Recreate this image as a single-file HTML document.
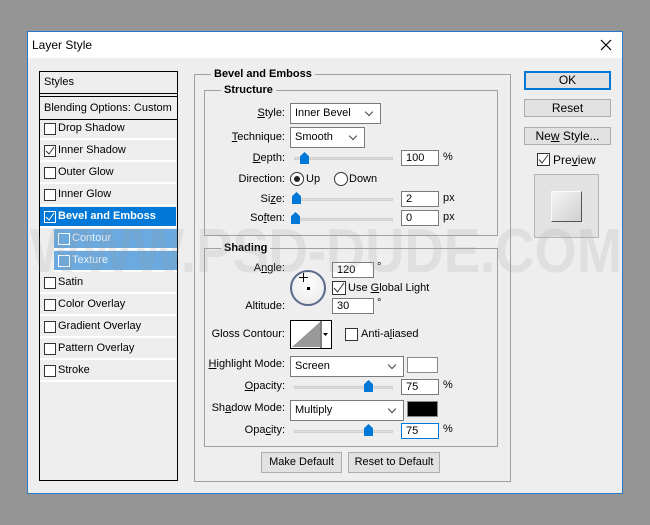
<!DOCTYPE html>
<html><head><meta charset="utf-8"><style>
*{box-sizing:border-box;margin:0;padding:0}
body{width:650px;height:525px;background:#959595;font-family:"Liberation Sans",sans-serif;font-size:11px;color:#000;position:relative;overflow:hidden}
.a{position:absolute}
#win{left:27px;top:31px;width:596px;height:463px;background:#eeeeee;border:1px solid #2b79c9}
#tb{left:0;top:0;width:594px;height:26px;background:#fff}
.box{position:absolute;border:1px solid #a0a0a0}
.lg{position:absolute;background:#eeeeee;font-weight:bold;padding:0 3px;font-size:11px}
.lbl{position:absolute;text-align:right;width:120px;font-size:11px}
.in{position:absolute;background:#fff;border:1px solid #7a7a7a;height:16px;padding-left:4px;line-height:14px;font-size:11px}
.dd{position:absolute;background:#fff;border:1px solid #7a7a7a;height:21px;padding-left:4px;line-height:19px;font-size:11px}
.dd:after{content:"";position:absolute;right:8px;top:5px;width:5px;height:5px;border-right:1px solid #444;border-bottom:1px solid #444;transform:rotate(45deg)}
.tr{position:absolute;height:3px;background:#ddd;border:1px solid #d0d0d0}
.th{position:absolute;width:9px;height:12px;background:#0078d7;clip-path:polygon(50% 0,100% 35%,100% 100%,0 100%,0 35%)}
.cb{position:absolute;width:12px;height:12px;border:1px solid #333;background:#fff}
.row{position:absolute;left:1px;width:136px;height:21px;border-bottom:2px solid #fff;line-height:19px;padding-left:18px}
.row .cb{left:4px;top:4px}
.btn{position:absolute;background:#e1e1e1;border:1px solid #adadad;text-align:center;font-size:12px}
u{text-decoration:underline}
</style></head><body>
<div id="win" class="a">
 <div id="tb" class="a"><span class="a" style="left:4px;top:6px;font-size:12px">Layer Style</span>
 <svg class="a" style="left:572px;top:7px" width="12" height="12"><path d="M1 1L11 11M11 1L1 11" stroke="#000" stroke-width="1.2"/></svg></div>
</div>

<!-- left list -->
<div class="a" style="left:39px;top:71px;width:139px;height:410px;border:1px solid #000;background:#eeeeee">
 <div class="a" style="left:0;top:0;width:137px;height:22px;border-bottom:1px solid #000;line-height:20px;padding-left:4px">Styles</div>
 <div class="a" style="left:0;top:24px;width:137px;height:24px;border-top:1px solid #000;border-bottom:1px solid #000;line-height:22px;padding-left:4px">Blending Options: Custom</div>
 <div class="row" style="top:47px;left:0"><div class="cb"></div>Drop Shadow</div>
 <div class="row" style="top:69px;left:0"><div class="cb"><svg width="10" height="10" style="position:absolute;left:0;top:0"><path d="M1 5L4 8L9 1" stroke="#333" fill="none"/></svg></div>Inner Shadow</div>
 <div class="row" style="top:91px;left:0"><div class="cb"></div>Outer Glow</div>
 <div class="row" style="top:113px;left:0"><div class="cb"></div>Inner Glow</div>
 <div class="row" style="top:135px;left:0;background:#0078d7;color:#fff;font-weight:bold"><div class="cb" style="background:#0078d7;border-color:#fff"><svg width="10" height="10" style="position:absolute;left:0;top:0"><path d="M1 5L4 8L9 1" stroke="#fff" fill="none"/></svg></div>Bevel and Emboss</div>
 <div class="row" style="top:157px;left:14px;width:123px;background:#6aaae0;color:#eaf3fc"><div class="cb" style="background:#6aaae0;border-color:#fff"></div>Contour</div>
 <div class="row" style="top:179px;left:14px;width:123px;background:#6aaae0;color:#eaf3fc"><div class="cb" style="background:#6aaae0;border-color:#fff"></div>Texture</div>
 <div class="row" style="top:201px;left:0"><div class="cb"></div>Satin</div>
 <div class="row" style="top:223px;left:0"><div class="cb"></div>Color Overlay</div>
 <div class="row" style="top:245px;left:0"><div class="cb"></div>Gradient Overlay</div>
 <div class="row" style="top:267px;left:0"><div class="cb"></div>Pattern Overlay</div>
 <div class="row" style="top:289px;left:0"><div class="cb"></div>Stroke</div>
</div>

<!-- group boxes -->
<div class="box" style="left:194px;top:74px;width:317px;height:408px"></div>
<div class="lg" style="left:211px;top:68px">Bevel and Emboss</div>
<div class="box" style="left:204px;top:90px;width:294px;height:146px"></div>
<div class="lg" style="left:221px;top:84px">Structure</div>
<div class="box" style="left:204px;top:248px;width:294px;height:199px"></div>
<div class="lg" style="left:221px;top:242px">Shading</div>

<!-- structure -->
<div class="lbl" style="left:165px;top:107px"><u>S</u>tyle:</div>
<div class="dd" style="left:290px;top:103px;width:91px">Inner Bevel</div>
<div class="lbl" style="left:165px;top:131px"><u>T</u>echnique:</div>
<div class="dd" style="left:290px;top:127px;width:75px">Smooth</div>
<div class="lbl" style="left:165px;top:152px"><u>D</u>epth:</div>
<div class="tr" style="left:294px;top:157px;width:99px"></div><div class="th" style="left:300px;top:152px"></div>
<div class="in" style="left:401px;top:150px;width:38px">100</div><div class="a" style="left:443px;top:151px">%</div>
<div class="lbl" style="left:165px;top:173px">Direction:</div>
<div class="a" style="left:290px;top:172px;width:14px;height:14px;border:1px solid #333;border-radius:50%;background:#fff"><div class="a" style="left:3px;top:3px;width:6px;height:6px;border-radius:50%;background:#222"></div></div>
<div class="a" style="left:306px;top:173px">Up</div>
<div class="a" style="left:334px;top:172px;width:14px;height:14px;border:1px solid #333;border-radius:50%;background:#fff"></div>
<div class="a" style="left:349px;top:173px">Down</div>
<div class="lbl" style="left:165px;top:193px">Si<u>z</u>e:</div>
<div class="tr" style="left:294px;top:198px;width:99px"></div><div class="th" style="left:292px;top:192px"></div>
<div class="in" style="left:401px;top:191px;width:38px">2</div><div class="a" style="left:443px;top:192px">px</div>
<div class="lbl" style="left:165px;top:212px">So<u>f</u>ten:</div>
<div class="tr" style="left:294px;top:218px;width:99px"></div><div class="th" style="left:291px;top:212px"></div>
<div class="in" style="left:401px;top:210px;width:38px">0</div><div class="a" style="left:443px;top:211px">px</div>

<!-- shading -->
<div class="lbl" style="left:165px;top:262px">A<u>n</u>gle:</div>
<div class="a" style="left:290px;top:270px;width:36px;height:36px;border:2px solid #5a6a8a;border-radius:50%;background:radial-gradient(circle at 50% 40%,#fff,#e6e6e6)"></div>
<div class="a" style="left:307px;top:287px;width:3px;height:3px;background:#000"></div>
<svg class="a" style="left:299px;top:273px" width="9" height="9"><path d="M4.5 0V9M0 4.5H9" stroke="#000" stroke-width="1"/></svg>
<div class="in" style="left:332px;top:262px;width:42px">120</div><div class="a" style="left:377px;top:261px">°</div>
<div class="cb" style="left:332px;top:281px;width:14px;height:14px"><svg width="12" height="12" style="position:absolute;left:0;top:0"><path d="M1 6L4.5 10L11 1" stroke="#333" fill="none"/></svg></div>
<div class="a" style="left:348px;top:282px">Use <u>G</u>lobal Light</div>
<div class="lbl" style="left:165px;top:300px">Altitude:</div>
<div class="in" style="left:332px;top:298px;width:42px">30</div><div class="a" style="left:377px;top:297px">°</div>
<div class="lbl" style="left:165px;top:328px">Gloss Contour:</div>
<div class="a" style="left:290px;top:320px;width:42px;height:29px;border:1px solid #000;background:#fff">
 <svg width="40" height="27" style="position:absolute;left:0;top:0"><path d="M1 26L29 1V26Z" fill="#999"/><path d="M30 0V27" stroke="#000"/><path d="M32 12h5l-2.5 3z" fill="#000"/></svg></div>
<div class="cb" style="left:345px;top:328px;width:13px;height:13px"></div>
<div class="a" style="left:361px;top:328px">Anti-a<u>l</u>iased</div>
<div class="lbl" style="left:165px;top:358px"><u>H</u>ighlight Mode:</div>
<div class="dd" style="left:290px;top:356px;width:114px">Screen</div>
<div class="a" style="left:407px;top:357px;width:31px;height:16px;background:#fff;border:1px solid #888"></div>
<div class="lbl" style="left:165px;top:380px"><u>O</u>pacity:</div>
<div class="tr" style="left:294px;top:386px;width:99px"></div><div class="th" style="left:364px;top:380px"></div>
<div class="in" style="left:401px;top:379px;width:38px">75</div><div class="a" style="left:443px;top:379px">%</div>
<div class="lbl" style="left:165px;top:402px">Sh<u>a</u>dow Mode:</div>
<div class="dd" style="left:290px;top:400px;width:114px">Multiply</div>
<div class="a" style="left:407px;top:401px;width:31px;height:16px;background:#000;border:1px solid #888"></div>
<div class="lbl" style="left:165px;top:424px">Opa<u>c</u>ity:</div>
<div class="tr" style="left:294px;top:430px;width:99px"></div><div class="th" style="left:364px;top:424px"></div>
<div class="in" style="left:401px;top:423px;width:38px;border-color:#0078d7">75</div><div class="a" style="left:443px;top:423px">%</div>

<div class="btn" style="left:261px;top:452px;width:81px;height:21px;line-height:19px;font-size:11px">Make Default</div>
<div class="btn" style="left:348px;top:452px;width:92px;height:21px;line-height:19px;font-size:11px">Reset to Default</div>

<!-- right buttons -->
<div class="btn" style="left:524px;top:71px;width:87px;height:19px;line-height:15px;border:2px solid #0078d7">OK</div>
<div class="btn" style="left:524px;top:99px;width:87px;height:18px;line-height:16px">Reset</div>
<div class="btn" style="left:524px;top:127px;width:87px;height:18px;line-height:16px">Ne<u>w</u> Style...</div>
<div class="cb" style="left:537px;top:153px;width:13px;height:13px"><svg width="11" height="11" style="position:absolute;left:0;top:0"><path d="M1 5.5L4 9L10 1" stroke="#333" fill="none"/></svg></div>
<div class="a" style="left:553px;top:153px;font-size:12px">Pre<u>v</u>iew</div>
<div class="a" style="left:534px;top:174px;width:65px;height:64px;border:1px solid #b5b5b5;background:#e2e2e2"></div>
<div class="a" style="left:551px;top:191px;width:31px;height:31px;background:linear-gradient(135deg,#f4f4f4,#d0d0d0);border-right:1px solid #555;border-bottom:1px solid #555;border-top:1px solid #fafafa;border-left:1px solid #fafafa"></div>

<!-- watermark -->
<svg class="a" style="left:0;top:0" width="650" height="525"><text x="30" y="272" textLength="592" lengthAdjust="spacingAndGlyphs" font-family="Liberation Sans" font-weight="bold" font-size="62" fill="#9a9a9a" fill-opacity="0.18">WWW.PSD-DUDE.COM</text></svg>
</body></html>
